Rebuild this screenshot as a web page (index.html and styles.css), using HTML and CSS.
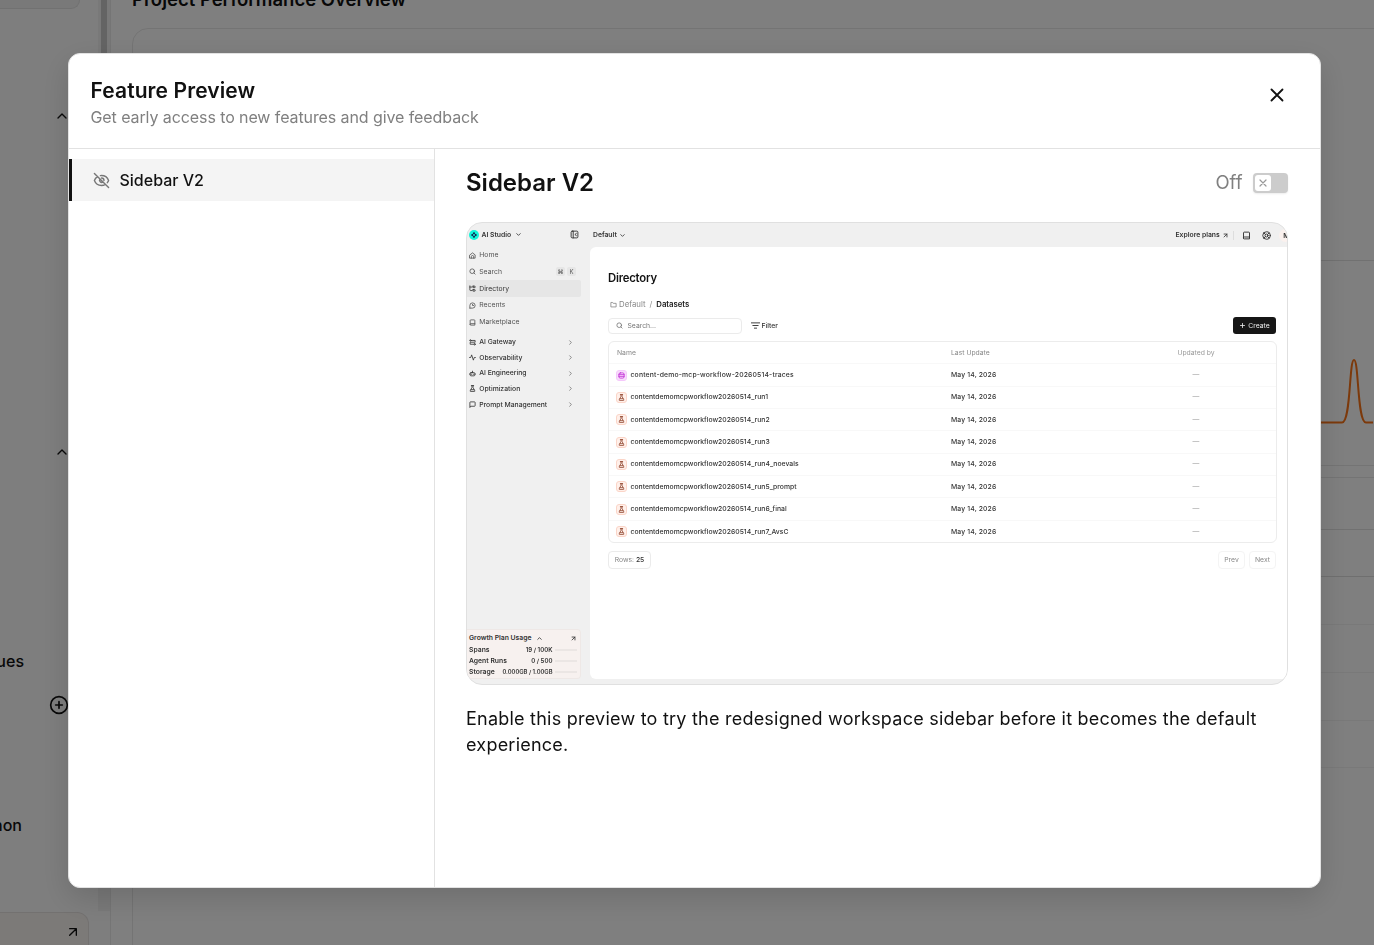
FILE: index.html
```html
<!DOCTYPE html>
<html lang="en">
<head>
  <meta charset="UTF-8">
  <meta name="viewport" content="width=device-width, initial-scale=1.0">
  <title>Feature Preview</title>
  <link rel="stylesheet" href="styles.css">
</head>
<body>
  <svg class="sprite">
    <symbol id="up" viewBox="0 0 24 24"><path d="m18 15-6-6-6 6"/></symbol>
    <symbol id="down" viewBox="0 0 24 24"><path d="m6 9 6 6 6-6"/></symbol>
    <symbol id="right" viewBox="0 0 24 24"><path d="m9 18 6-6-6-6"/></symbol>
    <symbol id="x" viewBox="0 0 24 24"><path d="M18 6 6 18M6 6l12 12"/></symbol>
    <symbol id="plus" viewBox="0 0 24 24"><path d="M5 12h14M12 5v14"/></symbol>
    <symbol id="plus-circle" viewBox="0 0 24 24"><circle cx="12" cy="12" r="10"/><path d="M8 12h8M12 8v8"/></symbol>
    <symbol id="arrow" viewBox="0 0 24 24"><path d="M7 7h10v10M7 17 17 7"/></symbol>
    <symbol id="eye-off" viewBox="0 0 24 24"><path d="M2 2l20 20M6.700 6.700C4.300 8 2.600 10 2 12c1.500 4 5.500 7 10 7 1.900 0 3.700-.5 5.300-1.500M10.500 5.100C16 4.700 20.500 8 22 12c-.4 1.100-1 2.100-1.800 3M9.900 9.900a3 3 0 0 0 4.200 4.200M12 8.500a3.500 3.500 0 0 1 3.500 3.500"/></symbol>
    <symbol id="panel" viewBox="0 0 24 24"><rect x="3" y="3" width="18" height="18" rx="3"/><path d="M8.500 3v18M17 9l-4 3 4 3"/></symbol>
    <symbol id="home" viewBox="0 0 24 24"><path d="M3 10l9-7 9 7v11H3zM8 21v-5a4 4 0 0 1 8 0v5"/></symbol>
    <symbol id="search" viewBox="0 0 24 24"><circle cx="11" cy="11" r="8"/><path d="m21 21-4.300-4.300"/></symbol>
    <symbol id="tree" viewBox="0 0 24 24"><path d="M3 3v14a2 2 0 0 0 2 2h4M3 7h6"/><rect x="13" y="4" width="8" height="5" rx="1"/><rect x="13" y="16" width="8" height="5" rx="1"/></symbol>
    <symbol id="recent" viewBox="0 0 24 24"><path d="M3 21v-9a9 9 0 1 1 9 9H3M12 8v4h4"/></symbol>
    <symbol id="book" viewBox="0 0 24 24"><path d="M4 19V5a2 2 0 0 1 2-2h12a2 2 0 0 1 2 2v16H6a2 2 0 0 1 0-5h14"/></symbol>
    <symbol id="gateway" viewBox="0 0 24 24"><path d="M9 5h12v6H4v7h11"/><circle cx="5" cy="5" r="2.500"/><circle cx="19" cy="18" r="2.500"/></symbol>
    <symbol id="pulse" viewBox="0 0 24 24"><path d="M2 12h4l3-9 6 18 3-9h4"/></symbol>
    <symbol id="bot" viewBox="0 0 24 24"><rect x="4" y="9" width="16" height="11" rx="3"/><path d="M12 9V4M2 14h2M20 14h2M9 14v1M15 14v1"/></symbol>
    <symbol id="flask" viewBox="0 0 24 24"><path d="M10 2v7L4 20a1.500 1.500 0 0 0 1 2h14a1.500 1.500 0 0 0 1-2L14 9V2M8 2h8M7 16h10"/></symbol>
    <symbol id="chat" viewBox="0 0 24 24"><path d="M3 21V5a2 2 0 0 1 2-2h14a2 2 0 0 1 2 2v11a2 2 0 0 1-2 2H7z"/></symbol>
    <symbol id="folder" viewBox="0 0 24 24"><path d="M3 19V5h6l2 3h10v11z"/></symbol>
    <symbol id="filter" viewBox="0 0 24 24"><path d="M1 5h22M5 12h14M9 19h6"/></symbol>
    <symbol id="db" viewBox="0 0 24 24"><rect x="3" y="3" width="18" height="18" rx="5"/><path d="M3 9h18M3 15h18"/></symbol>
    <symbol id="life" viewBox="0 0 24 24"><circle cx="12" cy="12" r="10"/><circle cx="12" cy="12" r="4"/><path d="m5 5 4 4M15 9l4-4M15 15l4 4M9 15l-4 4"/></symbol>
  </svg>

  <div class="app">
    <div class="app-side">
      <div class="side-scroll">
        <div class="side-list">
          <div class="side-chip"></div>
          <div class="side-row first"><svg class="icon s16"><use href="#up"/></svg></div>
          <div class="side-row second"><svg class="icon s16"><use href="#up"/></svg></div>
          <div class="side-row queues">Queues</div>
          <div class="side-row add"><svg class="icon s20"><use href="#plus-circle"/></svg></div>
          <div class="side-row python">non</div>
        </div>
        <div class="side-track"><div class="side-thumb"></div></div>
      </div>
      <div class="side-plan"><svg class="icon s16"><use href="#arrow"/></svg></div>
    </div>
    <div class="app-main">
      <h2 class="app-title">Project Performance Overview</h2>
      <div class="chart-card">
        <div class="chart-head"></div>
        <svg class="chart" width="100" height="80" viewBox="0 0 100 80"><path d="M0 71.500H69C78 71.500 76 9 81 9S84 71.500 93 71.500H100"/></svg>
      </div>
      <div class="table-card">
        <div class="t-head"></div>
        <div class="t-row first"></div>
        <div class="t-row"></div>
        <div class="t-row"></div>
        <div class="t-row"></div>
        <div class="t-row last"></div>
      </div>
    </div>
  </div>

  <div class="overlay">
    <div class="modal">
      <div class="modal-header">
        <div>
          <h1 class="modal-title">Feature Preview</h1>
          <p class="modal-sub">Get early access to new features and give feedback</p>
        </div>
        <svg class="icon close"><use href="#x"/></svg>
      </div>
      <div class="modal-body">
        <div class="features">
          <div class="feature active">
            <svg class="icon eye"><use href="#eye-off"/></svg>
            <span class="feature-name">Sidebar V2</span>
          </div>
        </div>
        <div class="detail">
          <div class="detail-head">
            <h2 class="detail-title">Sidebar V2</h2>
            <div class="switch-wrap">
              <span class="switch-label">Off</span>
              <div class="switch"><div class="knob"><svg class="icon"><use href="#x"/></svg></div></div>
            </div>
          </div>

          <div class="shot">
            <div class="mini-side">
              <div class="mini-brand">
                <svg class="logo" viewBox="0 0 20 20"><circle cx="10" cy="10" r="10"/><path d="M10 4l2.500 2.500L10 9 7.500 6.500zM10 11l2.500 2.500L10 16l-2.500-2.500zM6.500 7.500L9 10l-2.500 2.500L4 10zM13.500 7.500L16 10l-2.500 2.500L11 10z"/></svg>
                <span class="brand-name">AI Studio</span>
                <svg class="icon s7"><use href="#down"/></svg>
                <svg class="icon s9 push"><use href="#panel"/></svg>
              </div>
              <div class="mini-nav">
                <div class="mini-item"><svg class="icon s7"><use href="#home"/></svg>Home</div>
                <div class="mini-item"><svg class="icon s7"><use href="#search"/></svg>Search<span class="keys"><kbd>⌘</kbd><kbd>K</kbd></span></div>
                <div class="mini-item on"><svg class="icon s7"><use href="#tree"/></svg>Directory</div>
                <div class="mini-item"><svg class="icon s7"><use href="#recent"/></svg>Recents</div>
                <div class="mini-item"><svg class="icon s7"><use href="#book"/></svg>Marketplace</div>
              </div>
              <div class="mini-groups">
                <div class="mini-group"><svg class="icon s7"><use href="#gateway"/></svg>AI Gateway<svg class="icon s7 push"><use href="#right"/></svg></div>
                <div class="mini-group"><svg class="icon s7"><use href="#pulse"/></svg>Observability<svg class="icon s7 push"><use href="#right"/></svg></div>
                <div class="mini-group"><svg class="icon s7"><use href="#bot"/></svg>AI Engineering<svg class="icon s7 push"><use href="#right"/></svg></div>
                <div class="mini-group"><svg class="icon s7"><use href="#flask"/></svg>Optimization<svg class="icon s7 push"><use href="#right"/></svg></div>
                <div class="mini-group"><svg class="icon s7"><use href="#chat"/></svg>Prompt Management<svg class="icon s7 push"><use href="#right"/></svg></div>
              </div>
              <div class="usage">
                <div class="usage-head">Growth Plan Usage<svg class="icon s7"><use href="#up"/></svg><svg class="icon s7 push"><use href="#arrow"/></svg></div>
                <div class="usage-row">Spans<span class="amount">19 / 100K</span><i class="bar"></i></div>
                <div class="usage-row">Agent Runs<span class="amount">0 / 500</span><i class="bar"></i></div>
                <div class="usage-row">Storage<span class="amount long">0.000GB / 1.00GB</span><i class="bar"></i></div>
              </div>
            </div>

            <div class="mini-main">
              <div class="mini-top">
                <span class="workspace">Default</span>
                <svg class="icon s7"><use href="#down"/></svg>
                <div class="mini-actions">
                  <span class="explore">Explore plans</span>
                  <svg class="icon s7"><use href="#arrow"/></svg>
                  <i class="sep"></i>
                  <svg class="icon s9"><use href="#book"/></svg>
                  <svg class="icon s9 life"><use href="#life"/></svg>
                  <span class="avatar">M</span>
                </div>
              </div>
              <div class="mini-page">
                <h3 class="mini-title">Directory</h3>
                <div class="crumbs"><svg class="icon s7"><use href="#folder"/></svg>Default<span class="slash">/</span><b>Datasets</b></div>
                <div class="tools">
                  <div class="search"><svg class="icon s7"><use href="#search"/></svg>Search...</div>
                  <div class="filter"><svg class="icon s9"><use href="#filter"/></svg>Filter</div>
                  <div class="create"><svg class="icon s7"><use href="#plus"/></svg>Create</div>
                </div>
                <div class="grid">
                  <div class="grow head"><span class="name">Name</span><span class="date">Last Update</span><span class="by">Updated by</span></div>
                  <div class="grow"><span class="name"><i class="tile pink"><svg class="icon"><use href="#db"/></svg></i><span class="ds traces">content-demo-mcp-workflow-20260514-traces</span></span><span class="date">May 14, 2026</span><span class="by">—</span></div>
                  <div class="grow"><span class="name"><i class="tile"><svg class="icon"><use href="#flask"/></svg></i><span class="ds">contentdemomcpworkflow20260514_run1</span></span><span class="date">May 14, 2026</span><span class="by">—</span></div>
                  <div class="grow"><span class="name"><i class="tile"><svg class="icon"><use href="#flask"/></svg></i><span class="ds">contentdemomcpworkflow20260514_run2</span></span><span class="date">May 14, 2026</span><span class="by">—</span></div>
                  <div class="grow"><span class="name"><i class="tile"><svg class="icon"><use href="#flask"/></svg></i><span class="ds">contentdemomcpworkflow20260514_run3</span></span><span class="date">May 14, 2026</span><span class="by">—</span></div>
                  <div class="grow"><span class="name"><i class="tile"><svg class="icon"><use href="#flask"/></svg></i><span class="ds">contentdemomcpworkflow20260514_run4_noevals</span></span><span class="date">May 14, 2026</span><span class="by">—</span></div>
                  <div class="grow"><span class="name"><i class="tile"><svg class="icon"><use href="#flask"/></svg></i><span class="ds">contentdemomcpworkflow20260514_run5_prompt</span></span><span class="date">May 14, 2026</span><span class="by">—</span></div>
                  <div class="grow"><span class="name"><i class="tile"><svg class="icon"><use href="#flask"/></svg></i><span class="ds">contentdemomcpworkflow20260514_run6_final</span></span><span class="date">May 14, 2026</span><span class="by">—</span></div>
                  <div class="grow"><span class="name"><i class="tile"><svg class="icon"><use href="#flask"/></svg></i><span class="ds">contentdemomcpworkflow20260514_run7_AvsC</span></span><span class="date">May 14, 2026</span><span class="by">—</span></div>
                </div>
                <div class="pager">
                  <span class="rows">Rows: <b>25</b></span>
                  <span class="page-btn prev">Prev</span>
                  <span class="page-btn">Next</span>
                </div>
              </div>
            </div>
          </div>

          <p class="detail-text">Enable this preview to try the redesigned workspace sidebar before it becomes the default experience.</p>
        </div>
      </div>
    </div>
  </div>
</body>
</html>
```
FILE: styles.css
```css
* {
  box-sizing: border-box;
}

body {
  margin: 0;
  height: 945px;
  overflow: hidden;
  font-family: Inter, "Liberation Sans", sans-serif;
  color: #111;
  background: #fff;
}

h1, h2, h3, p {
  margin: 0;
}

.sprite {
  display: none;
}

.icon {
  flex: none;
  display: block;
  fill: none;
  stroke: currentColor;
  stroke-width: 2;
  stroke-linecap: round;
  stroke-linejoin: round;
}

.s7 { width: 7px; height: 7px; stroke-width: 2.8; }
.s9 { width: 9px; height: 9px; stroke-width: 2.5; }
.s16 { width: 16px; height: 16px; }
.s20 { width: 20px; height: 20px; }
.push { margin-left: auto; }

/* page behind the dialog */
.app {
  display: flex;
  height: 945px;
}

.app-side {
  flex: none;
  width: 111px;
  display: flex;
  flex-direction: column;
  background: #fcfcfc;
  border-right: 1px solid #eaeaea;
}

.side-scroll {
  flex: none;
  display: flex;
  height: 911px;
}

.side-list {
  width: 98px;
  overflow: hidden;
}

.side-chip {
  width: 80px;
  height: 9px;
  background: #f2f2f2;
  border: 1px solid #e2e2e2;
  border-width: 0 1px 1px 0;
  border-radius: 0 0 10px 0;
}

.side-row {
  display: flex;
  align-items: center;
  justify-content: flex-end;
  height: 24px;
  font-size: 16px;
  font-weight: 500;
}

.side-row.first { margin-top: 95px; padding-right: 28.5px; }
.side-row.second { margin-top: 312px; padding-right: 28.5px; }
.side-row.queues { margin-top: 185px; padding-right: 74px; }
.side-row.add { margin-top: 20px; padding-right: 29.5px; }
.side-row.python { margin-top: 96px; padding-right: 76px; }

.side-track {
  width: 12px;
  padding-left: 3px;
  background: #f2f2f2;
}

.side-thumb {
  width: 6px;
  height: 400px;
  background: #c8c8c8;
}

.side-plan {
  flex: none;
  width: 89px;
  height: 60px;
  margin-top: 1px;
  padding: 11px 7px 0 0;
  display: flex;
  justify-content: flex-end;
  background: #f9f4f1;
  border: 1px solid #e6e2e0;
  border-left: 0;
  border-radius: 0 12px 0 0;
}

.app-main {
  flex: 1;
  padding-left: 21px;
  overflow: hidden;
}

.app-title {
  height: 28px;
  margin-top: -15px;
  font-size: 18.5px;
  line-height: 29px;
  font-weight: 600;
}

.chart-card {
  width: 1400px;
  height: 438px;
  margin-top: 15px;
  border: 1px solid #e8e8e8;
  border-radius: 16px;
}

.chart-head {
  height: 232px;
  border-bottom: 1px solid #e2e2e2;
}

.chart {
  display: block;
  margin: 89.5px 0 0 1140px;
  fill: none;
  stroke: #f97316;
  stroke-width: 2;
}

.table-card {
  width: 1400px;
  height: 600px;
  margin-top: 11px;
  border: 1px solid #e8e8e8;
  border-radius: 16px;
}

.t-head {
  height: 52px;
  border-bottom: 1px solid #e2e2e2;
}

.t-row {
  height: 48px;
  border-bottom: 1px solid #f2f2f2;
}

.t-row.first { height: 47px; border-color: #dfdfdf; }
.t-row.last { height: 47px; }

/* dialog */
.overlay {
  position: fixed;
  inset: 0;
  padding: 53px 53px 57px 68px;
  background: rgba(0, 0, 0, 0.5);
}

.modal {
  width: 1253px;
  height: 835px;
  display: flex;
  flex-direction: column;
  overflow: hidden;
  background: #fff;
  border: 1px solid #e2e2e2;
  border-radius: 12px;
  box-shadow: 0 10px 30px rgba(0, 0, 0, 0.14);
}

.modal-header {
  display: flex;
  justify-content: space-between;
  height: 95px;
  padding: 22px 32px 0 21.5px;
  border-bottom: 1px solid #e2e2e2;
}

.modal-title {
  font-size: 21px;
  line-height: 29px;
  font-weight: 600;
  letter-spacing: 0.1px;
}

.modal-sub {
  font-size: 16px;
  line-height: 25px;
  letter-spacing: -0.09px;
  color: #808080;
}

.close {
  width: 22px;
  height: 22px;
  margin-top: 8px;
}

.modal-body {
  flex: 1;
  display: flex;
}

.features {
  width: 366px;
  padding-top: 10px;
  border-right: 1px solid #e2e2e2;
}

.feature {
  display: flex;
  align-items: center;
  height: 42px;
  padding-left: 20.5px;
  gap: 10px;
  border-left: 3px solid #111;
  background: #f4f4f4;
}

.eye {
  width: 17px;
  height: 17px;
  color: #777;
}

.feature-name {
  font-size: 16px;
  font-weight: 500;
}

.detail {
  flex: 1;
  padding: 16px 32px 0 31px;
}

.detail-head {
  display: flex;
  justify-content: space-between;
  align-items: center;
  height: 36px;
}

.detail-title {
  margin-top: -2px;
  font-size: 24px;
  font-weight: 600;
}

.switch-wrap {
  display: flex;
  align-items: center;
  gap: 10.5px;
}

.switch-label {
  margin-top: -2px;
  font-size: 18.5px;
  color: #808080;
}

.switch {
  width: 35px;
  height: 20px;
  padding: 2px;
  background: #ccc;
  border-radius: 4px;
  box-shadow: 0 1px 2px rgba(0, 0, 0, 0.08);
}

.knob {
  width: 16px;
  height: 16px;
  display: flex;
  align-items: center;
  justify-content: center;
  background: #fff;
  border-radius: 3px;
  color: #999;
}

.knob .icon {
  width: 12px;
  height: 12px;
  stroke-width: 2.4;
}

.detail-text {
  margin-top: 21px;
  font-size: 18px;
  line-height: 26px;
  letter-spacing: 0.23px;
}

/* product shot */
.shot {
  display: flex;
  width: 822px;
  height: 463px;
  margin-top: 21px;
  overflow: hidden;
  background: #f0f0f0;
  border: 1px solid #e0e0e0;
  border-radius: 16px;
  font-size: 6.8px;
  line-height: 10px;
  color: #333;
}

.mini-side {
  flex: none;
  width: 123px;
  display: flex;
  flex-direction: column;
  padding: 4.5px 9px 5px 0;
}

.mini-brand {
  display: flex;
  align-items: center;
  height: 14px;
  padding: 0 2px;
}

.mini-brand .push {
  margin-right: 0.5px;
}

.logo {
  width: 10px;
  height: 10px;
  fill: #14f5da;
}

.logo path {
  fill: #114;
}

.brand-name {
  margin: 0 4px 0 2.5px;
  font-weight: 600;
}

.mini-nav {
  margin-top: 5.2px;
}

.mini-item, .mini-group {
  display: flex;
  align-items: center;
  gap: 3px;
  padding: 0 7px 0 2.2px;
}

.mini-item {
  height: 16.75px;
  color: #555;
  letter-spacing: 0.05px;
}

.mini-item.on {
  color: #333;
  background: #e6e6e6;
  border-radius: 0 2px 2px 0;
}

.mini-group {
  height: 15.65px;
  font-weight: 500;
}

.mini-groups {
  margin-top: 3.8px;
}

.mini-group .push {
  color: #777;
}

.keys {
  display: flex;
  gap: 2px;
  margin-left: auto;
  margin-right: -2px;
}

kbd {
  width: 9px;
  height: 9px;
  font: 6px/9px Inter, "DejaVu Sans", sans-serif;
  text-align: center;
  background: #e6e6e6;
  border-radius: 2px;
}

.usage {
  height: 50px;
  margin-top: auto;
  padding: 2px 3px 0 2px;
  background: #f7f1ef;
  border: 1px solid #eee8e6;
  border-left: 0;
  border-radius: 0 4px 4px 0;
  font-weight: 600;
}

.usage-head, .usage-row {
  display: flex;
  align-items: center;
  height: 11.2px;
}

.usage-head {
  height: 12px;
}

.usage-head .icon {
  margin-left: 4px;
}

.usage-head .push {
  margin-left: auto;
}

.amount {
  margin-left: auto;
  font-size: 6.1px;
}

.amount.long {
  font-size: 5.8px;
}

.bar {
  width: 22px;
  height: 2px;
  margin-left: 2.5px;
  background: #ebe6e4;
}

.mini-main {
  flex: none;
  width: 697px;
}

.mini-top {
  display: flex;
  align-items: center;
  height: 24px;
  padding-left: 3px;
  font-weight: 600;
}

.workspace {
  margin-right: 2px;
}

.mini-actions {
  flex: none;
  display: flex;
  align-items: center;
  width: 120px;
  margin-left: auto;
  margin-right: -8.5px;
}

.explore {
  margin-right: 2px;
}

.sep {
  width: 1px;
  height: 9px;
  margin: 0 8.5px 0 4px;
  background: #ddd;
}

.life {
  margin: 0 8px 0 11px;
}

.avatar {
  flex: none;
  width: 13px;
  height: 13px;
  padding-left: 4px;
  line-height: 13px;
  background: #fbf1ee;
  border-radius: 50%;
}

.mini-page {
  height: 432px;
  padding: 24px 10px 0 18px;
  background: #fff;
  border-radius: 6px 0 0 6px;
}

.mini-title {
  font-size: 11.3px;
  line-height: 14px;
  font-weight: 600;
  letter-spacing: -0.2px;
  color: #111;
}

.crumbs {
  display: flex;
  align-items: center;
  gap: 2px;
  height: 12px;
  margin-top: 13px;
  padding-left: 2px;
  font-size: 7.8px;
  color: #888;
}

.crumbs b {
  font-weight: 600;
  letter-spacing: -0.05px;
  color: #222;
}

.slash {
  margin: 0 2px;
}

.tools {
  display: flex;
  align-items: center;
  height: 18px;
  margin-top: 6.5px;
}

.search {
  display: flex;
  align-items: center;
  gap: 5px;
  width: 134px;
  height: 16px;
  padding-left: 6.5px;
  border: 1px solid #ebebeb;
  border-radius: 4px;
  color: #777;
}

.filter {
  display: flex;
  align-items: center;
  gap: 2px;
  margin-left: 8.5px;
  font-weight: 500;
}

.create {
  display: flex;
  align-items: center;
  justify-content: center;
  gap: 2px;
  width: 43px;
  height: 17px;
  margin-left: auto;
  margin-right: 1px;
  background: #161616;
  border-radius: 3px;
  color: #eee;
}

.grid {
  height: 202px;
  margin-top: 6.5px;
  border: 1px solid #ececec;
  border-radius: 6px;
}

.grow {
  display: flex;
  align-items: center;
  height: 22.35px;
  padding-left: 7px;
  border-bottom: 1px solid #f8f8f8;
}

.grow:last-child {
  border-bottom: 0;
}

.grow.head {
  padding-left: 8px;
  color: #888;
}

.name {
  display: flex;
  align-items: center;
  gap: 3.5px;
  width: 335px;
}

.head .name {
  width: 334px;
}

.date {
  width: 208px;
  font-weight: 500;
  letter-spacing: 0.15px;
}

.head .date {
  font-weight: 400;
  letter-spacing: 0;
}

.by {
  width: 74px;
  text-align: center;
  color: #999;
}

.ds {
  color: #333;
  font-weight: 500;
  letter-spacing: 0.02px;
}

.traces {
  letter-spacing: 0.18px;
}

.tile {
  width: 11px;
  height: 11px;
  display: flex;
  align-items: center;
  justify-content: center;
  background: #fff0ea;
  border: 1px solid #fbd5c8;
  border-radius: 3px;
  color: #8a3a22;
}

.tile .icon {
  width: 7px;
  height: 7px;
  stroke-width: 2.6;
}

.tile.pink {
  color: #c026d3;
  background: #f8dcfc;
  border-color: #f5c8fb;
}

.pager {
  display: flex;
  height: 18px;
  margin-top: 8px;
  padding-right: 1px;
  line-height: 16px;
  color: #888;
}

.pager b {
  font-weight: 500;
  color: #333;
}

.rows, .page-btn {
  border: 1px solid #ebebeb;
  border-radius: 4px;
  text-align: center;
}

.rows {
  width: 43px;
}

.page-btn {
  width: 27px;
  border-color: #f4f4f4;
}

.prev {
  margin-left: auto;
  margin-right: 4px;
}
```
